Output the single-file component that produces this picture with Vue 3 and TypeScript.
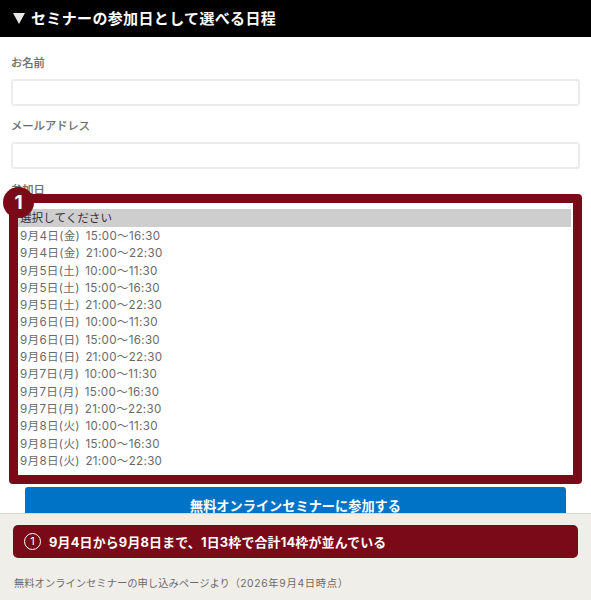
<script setup lang="ts">
const slots: string[] = [
  '9月4日(金) 15:00〜16:30',
  '9月4日(金) 21:00〜22:30',
  '9月5日(土) 10:00〜11:30',
  '9月5日(土) 15:00〜16:30',
  '9月5日(土) 21:00〜22:30',
  '9月6日(日) 10:00〜11:30',
  '9月6日(日) 15:00〜16:30',
  '9月6日(日) 21:00〜22:30',
  '9月7日(月) 10:00〜11:30',
  '9月7日(月) 15:00〜16:30',
  '9月7日(月) 21:00〜22:30',
  '9月8日(火) 10:00〜11:30',
  '9月8日(火) 15:00〜16:30',
  '9月8日(火) 21:00〜22:30',
]
</script>

<template>
  <div class="page">
    <main class="main">
      <h2 class="head"><span class="tri"></span>セミナーの参加日として選べる日程</h2>
      <form class="form">
        <label class="label">お名前</label>
        <div class="input"></div>
        <label class="label second">メールアドレス</label>
        <div class="input"></div>
        <label class="label third">参加日</label>
        <div class="callout">
          <span class="badge">1</span>
          <ul class="list">
            <li class="opt selected">選択してください</li>
            <li v-for="s in slots" :key="s" class="opt">{{ s }}</li>
          </ul>
        </div>
        <button type="button" class="submit">無料オンラインセミナーに参加する</button>
      </form>
    </main>
    <footer class="foot">
      <div class="banner">
        <span class="num">1</span>9月4日から9月8日まで、1日3枠で合計14枠が並んでいる
      </div>
      <p class="source">無料オンラインセミナーの申し込みページより（<span class="when">2026年9月4日時点</span>）</p>
    </footer>
  </div>
</template>

<style>
html, body { margin: 0; padding: 0; background: #fff; }
</style>

<style scoped>
.page {
  width: 591px;
  height: 600px;
  display: flex;
  flex-direction: column;
  overflow: hidden;
  font-family: Inter, "Noto Sans CJK JP", sans-serif;
}
.main { height: 513px; overflow: hidden; flex: none; }
.head {
  margin: 0;
  height: 37px;
  background: #000;
  color: #fff;
  font-size: 15px;
  font-weight: 700;
  line-height: 37px;
  padding-left: 13px;
  letter-spacing: 0.35px;
  display: flex;
  align-items: center;
}
.tri {
  width: 0;
  height: 0;
  border-left: 6px solid transparent;
  border-right: 6px solid transparent;
  border-top: 11px solid #e8e8e8;
  margin-right: 6px;
}
.form { padding: 0 11px; display: flex; flex-direction: column; }
.label {
  display: block;
  font-size: 11.3px;
  font-weight: 400;
  -webkit-text-stroke: 0.25px #666;
  line-height: 18px;
  color: #666;
  margin-top: 17px;
}
.second { margin-top: 11px; }
.third { margin-top: 12px; }
.input {
  box-sizing: border-box;
  margin-top: 7px;
  height: 27px;
  border: 2px solid #ececec;
  border-radius: 3px;
  background: #fff;
}
.callout {
  position: relative;
  box-sizing: border-box;
  margin: -5px -2px 0;
  height: 290px;
  border: 9px solid #7b0a18;
  border-radius: 4px;
  background: #fff;
}
.badge {
  position: absolute;
  left: -15px;
  top: -16px;
  width: 31px;
  height: 31px;
  border-radius: 50%;
  background: #7b0a18;
  color: #fff;
  font-size: 19px;
  font-weight: 700;
  line-height: 31px;
  text-align: center;
}
.list { list-style: none; margin: 6px 2px 0 0; padding: 0; }
.opt {
  box-sizing: border-box;
  height: 17.3px;
  padding: 1px 0 0 2px;
  line-height: 17.3px;
  font-size: 11.6px;
  letter-spacing: 0.32px;
  word-spacing: 2px;
  color: #6a6a6a;
  white-space: nowrap;
}
.selected { background: #cecece; color: #333; height: 18px; letter-spacing: 0; }
.submit {
  display: block;
  box-sizing: border-box;
  margin: 3px 14px 0;
  height: 40px;
  border: 0;
  border-radius: 3px;
  background: #0173c6;
  color: #fff;
  font-family: inherit;
  font-size: 13.2px;
  font-weight: 700;
  line-height: 38px;
  padding: 0 0 3px;
  text-align: center;
}
.foot {
  flex: 1;
  background: #f0eee9;
  border-top: 1px solid #d9d6d0;
  padding: 11px 13px 0;
  box-sizing: border-box;
}
.banner {
  box-sizing: border-box;
  height: 33px;
  width: 565px;
  border-radius: 5px;
  background: #7b0a18;
  color: #fff;
  font-size: 12.9px;
  letter-spacing: 0.2px;
  font-weight: 700;
  padding-left: 11px;
  white-space: nowrap;
  display: flex;
  align-items: center;
  gap: 8px;
}
.num {
  box-sizing: border-box;
  width: 17px;
  height: 17px;
  border: 1.5px solid #fff;
  border-radius: 50%;
  font-size: 11px;
  font-weight: 400;
  line-height: 14px;
  text-align: center;
}
.source {
  margin: 17px 0 0 1px;
  font-size: 10.3px;
  line-height: 16px;
  color: #6b6b6b;
}
.when { letter-spacing: 0.7px; }
</style>
